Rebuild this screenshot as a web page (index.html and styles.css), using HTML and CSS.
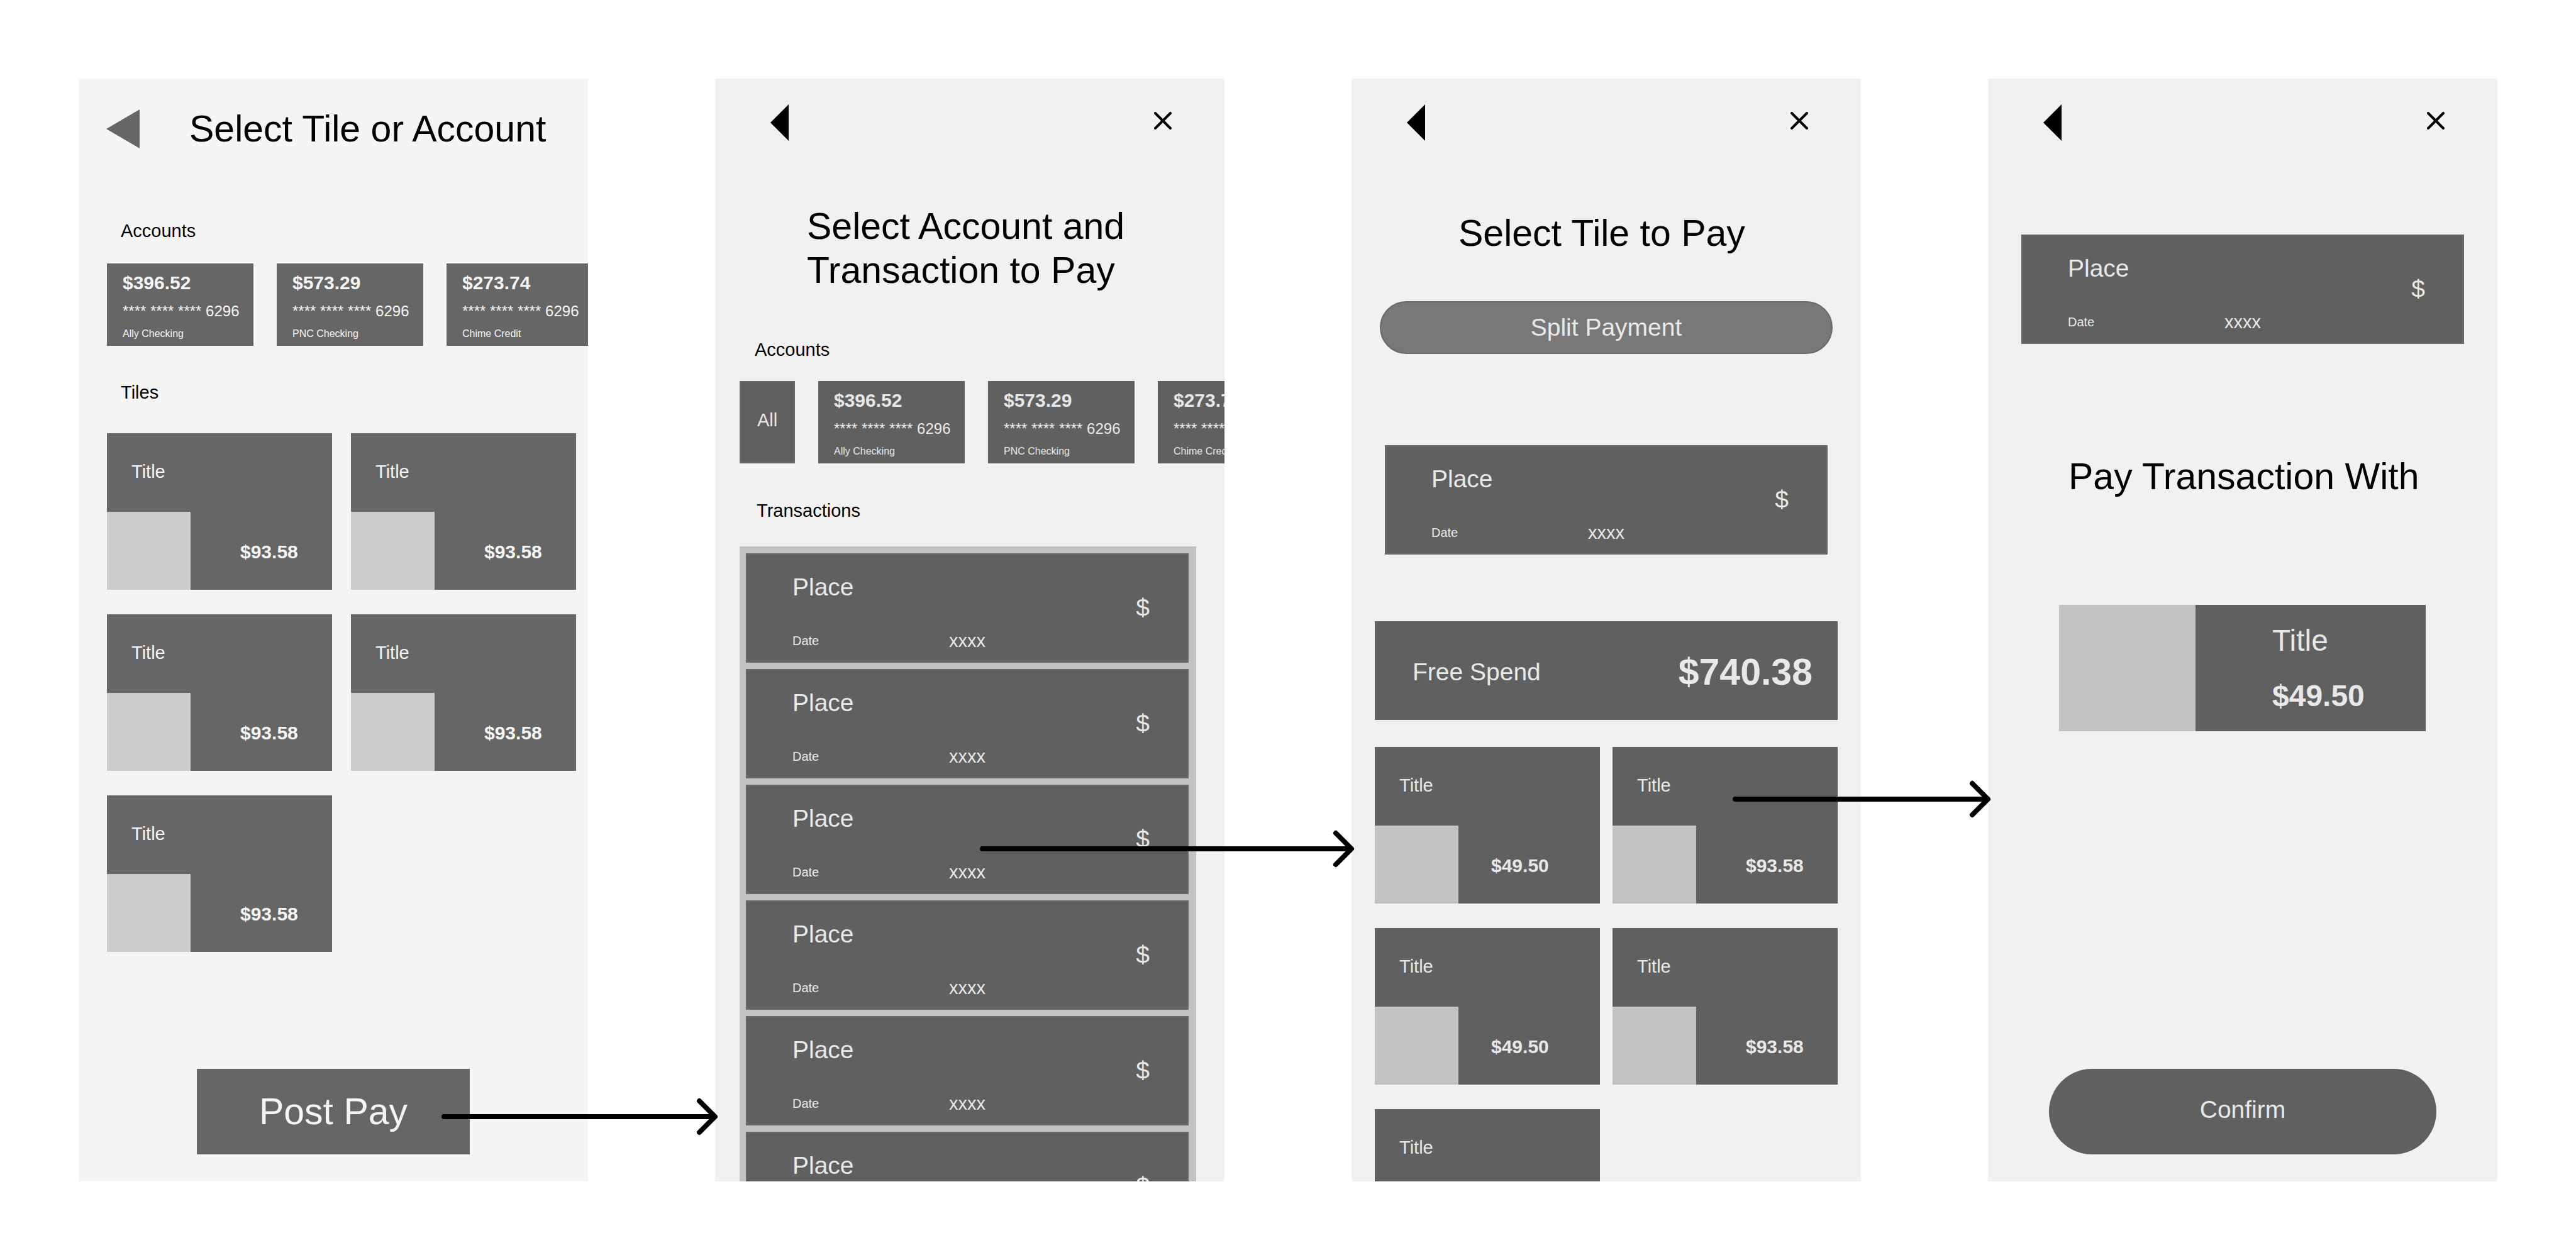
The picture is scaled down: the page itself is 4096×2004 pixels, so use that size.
FILE: index.html
```html
<!DOCTYPE html>
<html lang="en">
<head>
<meta charset="utf-8">
<title>Post Pay flow</title>
<link rel="stylesheet" href="styles.css">
</head>
<body>
<main class="flow">

  <section class="screen screen-light">
    <header class="title-bar">
      <button class="icon-button" type="button" aria-label="Back">
        <svg class="back-large" viewBox="0 0 53 62"><path d="M0 31 53 0v62z" fill="currentColor"/></svg>
      </button>
      <h1 class="title">Select Tile or Account</h1>
    </header>
    <h2 class="label label-start">Accounts</h2>
    <div class="accounts">
      <button class="account" type="button"><b class="amount">$396.52</b><span class="number">**** **** **** 6296</span><span class="bank">Ally Checking</span></button>
      <button class="account" type="button"><b class="amount">$573.29</b><span class="number">**** **** **** 6296</span><span class="bank">PNC Checking</span></button>
      <button class="account" type="button"><b class="amount">$273.74</b><span class="number">**** **** **** 6296</span><span class="bank">Chime Credit</span></button>
    </div>
    <h2 class="label label-tiles">Tiles</h2>
    <div class="tiles tiles-home">
      <button class="tile" type="button"><span class="name">Title</span><i class="swatch"></i><b class="amount">$93.58</b></button>
      <button class="tile" type="button"><span class="name">Title</span><i class="swatch"></i><b class="amount">$93.58</b></button>
      <button class="tile" type="button"><span class="name">Title</span><i class="swatch"></i><b class="amount">$93.58</b></button>
      <button class="tile" type="button"><span class="name">Title</span><i class="swatch"></i><b class="amount">$93.58</b></button>
      <button class="tile" type="button"><span class="name">Title</span><i class="swatch"></i><b class="amount">$93.58</b></button>
    </div>
    <button class="post-pay" type="button">Post Pay</button>
  </section>

  <section class="screen">
    <header class="nav-bar">
      <button class="icon-button" type="button" aria-label="Back"><svg class="back" viewBox="0 0 29 58"><path d="M0 29 29 0v58z" fill="currentColor"/></svg></button>
      <button class="icon-button close-button" type="button" aria-label="Close"><svg class="close" viewBox="0 0 28 28"><path d="M2 2 26 26M26 2 2 26" stroke="currentColor" stroke-width="4" stroke-linecap="round"/></svg></button>
    </header>
    <h1 class="title title-transaction">Select Account and<br>Transaction to Pay</h1>
    <h2 class="label label-accounts">Accounts</h2>
    <div class="accounts accounts-filter">
      <button class="account-all" type="button">All</button>
      <button class="account" type="button"><b class="amount">$396.52</b><span class="number">**** **** **** 6296</span><span class="bank">Ally Checking</span></button>
      <button class="account" type="button"><b class="amount">$573.29</b><span class="number">**** **** **** 6296</span><span class="bank">PNC Checking</span></button>
      <button class="account" type="button"><b class="amount">$273.74</b><span class="number">**** **** **** 6296</span><span class="bank">Chime Credit</span></button>
    </div>
    <h2 class="label label-transactions">Transactions</h2>
    <div class="transactions">
      <button class="transaction" type="button"><span class="place">Place</span><span class="date">Date</span><span class="card-digits">xxxx</span><span class="price">$</span></button>
      <button class="transaction" type="button"><span class="place">Place</span><span class="date">Date</span><span class="card-digits">xxxx</span><span class="price">$</span></button>
      <button class="transaction" type="button"><span class="place">Place</span><span class="date">Date</span><span class="card-digits">xxxx</span><span class="price">$</span></button>
      <button class="transaction" type="button"><span class="place">Place</span><span class="date">Date</span><span class="card-digits">xxxx</span><span class="price">$</span></button>
      <button class="transaction" type="button"><span class="place">Place</span><span class="date">Date</span><span class="card-digits">xxxx</span><span class="price">$</span></button>
      <button class="transaction" type="button"><span class="place">Place</span><span class="date">Date</span><span class="card-digits">xxxx</span><span class="price">$</span></button>
    </div>
  </section>

  <section class="screen">
    <header class="nav-bar">
      <button class="icon-button" type="button" aria-label="Back"><svg class="back" viewBox="0 0 29 58"><path d="M0 29 29 0v58z" fill="currentColor"/></svg></button>
      <button class="icon-button close-button" type="button" aria-label="Close"><svg class="close" viewBox="0 0 28 28"><path d="M2 2 26 26M26 2 2 26" stroke="currentColor" stroke-width="4" stroke-linecap="round"/></svg></button>
    </header>
    <h1 class="title title-tile">Select Tile to Pay</h1>
    <button class="split" type="button">Split Payment</button>
    <div class="transaction transaction-split"><span class="place">Place</span><span class="date">Date</span><span class="card-digits">xxxx</span><span class="price">$</span></div>
    <button class="free-spend" type="button"><span>Free Spend</span><b class="balance">$740.38</b></button>
    <div class="tiles tiles-pay">
      <button class="tile tile-near" type="button"><span class="name">Title</span><i class="swatch"></i><b class="amount">$49.50</b></button>
      <button class="tile" type="button"><span class="name">Title</span><i class="swatch"></i><b class="amount">$93.58</b></button>
      <button class="tile tile-near" type="button"><span class="name">Title</span><i class="swatch"></i><b class="amount">$49.50</b></button>
      <button class="tile" type="button"><span class="name">Title</span><i class="swatch"></i><b class="amount">$93.58</b></button>
      <button class="tile tile-near" type="button"><span class="name">Title</span><i class="swatch"></i></button>
    </div>
  </section>

  <section class="screen">
    <header class="nav-bar">
      <button class="icon-button" type="button" aria-label="Back"><svg class="back" viewBox="0 0 29 58"><path d="M0 29 29 0v58z" fill="currentColor"/></svg></button>
      <button class="icon-button close-button" type="button" aria-label="Close"><svg class="close" viewBox="0 0 28 28"><path d="M2 2 26 26M26 2 2 26" stroke="currentColor" stroke-width="4" stroke-linecap="round"/></svg></button>
    </header>
    <div class="transaction transaction-confirm"><span class="place">Place</span><span class="date">Date</span><span class="card-digits">xxxx</span><span class="price">$</span></div>
    <h1 class="title title-with">Pay Transaction With</h1>
    <div class="chosen-tile">
      <i class="chosen-swatch"></i>
      <div class="chosen-text"><span>Title</span><b>$49.50</b></div>
    </div>
    <button class="confirm" type="button">Confirm</button>
  </section>

  <svg class="arrows" viewBox="0 0 4096 2004" aria-hidden="true">
    <g fill="none" stroke="#000" stroke-width="8" stroke-linecap="round" stroke-linejoin="round">
      <path d="M706 1776H1136M1112 1751 1137 1776 1112 1801"/>
      <path d="M1562 1350H2148M2124 1325 2149 1350 2124 1375"/>
      <path d="M2759 1271H3160M3136 1246 3161 1271 3136 1296"/>
    </g>
  </svg>
</main>
</body>
</html>
```
FILE: styles.css
```css
* {
  box-sizing: border-box;
}

body {
  margin: 0;
  background: #fff;
  color: #000;
  font-family: "Liberation Sans", Arial, sans-serif;
}

button {
  margin: 0;
  padding: 0;
  border: 0;
  border-radius: 0;
  background: none;
  color: inherit;
  font: inherit;
  text-align: left;
  cursor: pointer;
}

/* Board */

.flow {
  position: relative;
  display: grid;
  grid-template-columns: repeat(4, minmax(0, 1fr));
  grid-template-rows: minmax(0, 1fr);
  gap: 202px;
  height: 100vh;
  padding: 125px;
}

.arrows {
  position: absolute;
  top: 0;
  left: 0;
  width: 100%;
  height: 100%;
  pointer-events: none;
}

.screen {
  --fill: #606060;
  --edge: #696969;
  --swatch: #c2c2c2;
  --ink: #e8e8e8;
  display: flex;
  flex-direction: column;
  overflow: hidden;
  background: #f1f1f1;
}

.screen > * {
  flex-shrink: 0;
}

.screen-light {
  --fill: #666;
  --edge: #666;
  --swatch: #ccc;
  --ink: #f5f5f5;
  background: #f5f5f5;
}

/* Headers and headings */

.title-bar {
  display: flex;
  align-items: center;
  gap: 79px;
  padding: 45px 0 0 44px;
}

.nav-bar {
  display: flex;
  justify-content: space-between;
  align-items: flex-start;
  padding: 41px 84px 0 88px;
}

.icon-button {
  display: flex;
  align-items: center;
}

.close-button {
  height: 52px;
}

.back-large {
  width: 53px;
  height: 62px;
  color: #666;
}

.back {
  width: 29px;
  height: 58px;
}

.close {
  width: 28px;
  height: 28px;
}

.title {
  margin: 0;
  font-size: 59px;
  font-weight: 400;
  line-height: 70px;
}

.title-transaction {
  margin: 101px 0 0 146px;
}

.title-tile {
  margin: 112px 0 0 170px;
}

.title-with {
  margin: 176px 0 0 128px;
}

.label {
  margin: 0;
  font-size: 29px;
  font-weight: 400;
  line-height: 36px;
}

.label-start {
  margin: 109px 0 34px 67px;
}

.label-tiles {
  margin: 56px 0 47px 67px;
}

.label-accounts {
  margin: 73px 0 32px 63px;
}

.label-transactions {
  margin: 57px 0 39px 66px;
}

/* Accounts */

.accounts {
  display: flex;
  gap: 37px;
  padding-left: 45px;
}

.accounts-filter {
  padding-left: 39px;
}

.account,
.account-all {
  flex: none;
  height: 131px;
  background: var(--fill);
  color: var(--ink);
}

.account {
  display: flex;
  flex-direction: column;
  width: 233px;
  padding: 13px 0 0 25px;
  white-space: nowrap;
}

.account-all {
  width: 88px;
  padding-bottom: 6px;
  border: 2px solid var(--edge);
  font-size: 29px;
  text-align: center;
}

.amount {
  font-size: 30px;
  line-height: 36px;
}

.number {
  margin-top: 12px;
  font-size: 24px;
  line-height: 30px;
}

.bank {
  margin-top: 11px;
  font-size: 16px;
  line-height: 20px;
}

/* Tiles */

.tiles {
  display: grid;
  grid-template-columns: 1fr 1fr;
  gap: 39px 30px;
  padding: 0 19px 0 45px;
}

.tiles-pay {
  column-gap: 20px;
  margin-top: 43px;
  padding: 0 37px;
}

.tile {
  display: grid;
  grid-template-columns: 133px 1fr;
  grid-template-rows: 125px 124px;
  background: var(--fill);
  color: var(--ink);
}

.name {
  grid-column: 1 / -1;
  padding: 43px 0 0 39px;
  font-size: 29px;
  line-height: 36px;
}

.swatch {
  background: var(--swatch);
}

.tile .amount {
  padding: 46px 0 0 79px;
}

.tile-near .amount {
  padding-left: 52px;
}

/* Transactions */

.transactions {
  display: flex;
  flex-direction: column;
  gap: 10px;
  margin: 0 45px 0 39px;
  padding: 11px 12px 11px 10px;
  background: var(--swatch);
}

.transaction {
  display: grid;
  grid-template-columns: 249px 1fr auto;
  grid-template-rows: 48px 32px;
  row-gap: 45px;
  align-items: center;
  padding: 28px 60px 17px 72px;
  border: 2px solid var(--edge);
  background: var(--fill);
  color: var(--ink);
  font-size: 29px;
  line-height: 32px;
}

.transaction-split {
  margin: 145px 53px 0;
}

.transaction-confirm {
  margin: 149px 53px 0;
}

.place {
  grid-area: 1 / 1;
  font-size: 39px;
  line-height: 48px;
}

.date {
  grid-area: 2 / 1;
  font-size: 20px;
}

.card-digits {
  grid-area: 2 / 2;
}

.price {
  grid-area: 1 / 3 / 3 / 4;
  padding-bottom: 12px;
  font-size: 39px;
  line-height: 48px;
}

/* Buttons */

.post-pay,
.confirm {
  align-self: center;
  width: 434px;
  height: 136px;
  margin: auto 0 43px;
  background: var(--fill);
  color: var(--ink);
  font-size: 59px;
  text-align: center;
}

.confirm {
  width: 616px;
  padding-bottom: 6px;
  border-radius: 68px;
  font-size: 39px;
}

.split {
  height: 84px;
  margin: 73px 45px 0;
  border: 2px solid #696969;
  border-radius: 42px;
  background: #787878;
  color: var(--ink);
  font-size: 39px;
  text-align: center;
}

.free-spend {
  display: flex;
  justify-content: space-between;
  align-items: center;
  height: 157px;
  margin: 106px 37px 0;
  padding: 5px 40px 0 60px;
  background: var(--fill);
  color: var(--ink);
  font-size: 39px;
}

.balance {
  font-size: 59px;
}

.chosen-tile {
  display: flex;
  height: 201px;
  margin: 169px 114px 0 113px;
  background: var(--fill);
  color: var(--ink);
  font-size: 48px;
  line-height: 60px;
}

.chosen-swatch {
  flex: none;
  width: 217px;
  background: var(--swatch);
}

.chosen-text {
  display: flex;
  flex-direction: column;
  gap: 28px;
  padding: 27px 0 0 122px;
}
```
